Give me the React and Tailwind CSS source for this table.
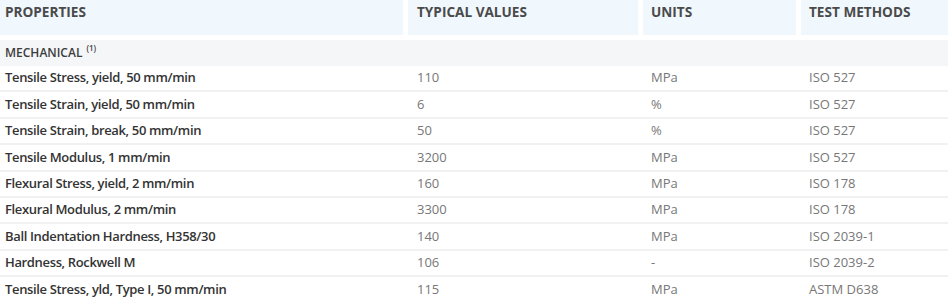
import React from "react";

const rows = [
  ["Tensile Stress, yield, 50 mm/min", "110", "MPa", "ISO 527"],
  ["Tensile Strain, yield, 50 mm/min", "6", "%", "ISO 527"],
  ["Tensile Strain, break, 50 mm/min", "50", "%", "ISO 527"],
  ["Tensile Modulus, 1 mm/min", "3200", "MPa", "ISO 527"],
  ["Flexural Stress, yield, 2 mm/min", "160", "MPa", "ISO 178"],
  ["Flexural Modulus, 2 mm/min", "3300", "MPa", "ISO 178"],
  ["Ball Indentation Hardness, H358/30", "140", "MPa", "ISO 2039-1"],
  ["Hardness, Rockwell M", "106", "-", "ISO 2039-2"],
  ["Tensile Stress, yld, Type I, 50 mm/min", "115", "MPa", "ASTM D638"],
];

const cols = "grid grid-cols-[403px_230px_153px_1fr] gap-x-[5px]";

export default function App() {
  return (
    <div className="w-[948px] h-[301px] bg-white overflow-hidden font-['Open_Sans',sans-serif] text-[13px]">
      {/* header */}
      <div className={`${cols} h-[35px] text-[#4a4a4a] font-bold text-[13.6px]`}>
        <div className="bg-[#f0f8fd] pl-[5px] pt-[2px]">PROPERTIES</div>
        <div className="bg-[#f0f8fd] pl-[9px] pt-[2px]">TYPICAL VALUES</div>
        <div className="bg-[#f0f8fd] pl-[8px] pt-[2px]">UNITS</div>
        <div className="bg-[#f0f8fd] pl-[8px] pt-[2px]">TEST METHODS</div>
      </div>

      <div className="h-[26px] mt-[5px] bg-[#f5f6f8] flex items-center pl-[5px] text-[12px] font-semibold text-[#3c3c3c]">
        MECHANICAL
        <sup className="text-[8px] ml-[4px] -top-[5px]">(1)</sup>
      </div>

      {rows.map((r, i) => (
        <div
          key={i}
          className={`${cols} h-[26.4px] items-center border-b-2 border-[#f1f1f1]`}
        >
          <div className="pl-[5px] font-semibold text-[#333333] tracking-[-0.35px] whitespace-nowrap">{r[0]}</div>
          <div className="pl-[9px] text-[#777777]">{r[1]}</div>
          <div className="pl-[8px] text-[#777777]">{r[2]}</div>
          <div className="pl-[8px] text-[#777777]">{r[3]}</div>
        </div>
      ))}
    </div>
  );
}
